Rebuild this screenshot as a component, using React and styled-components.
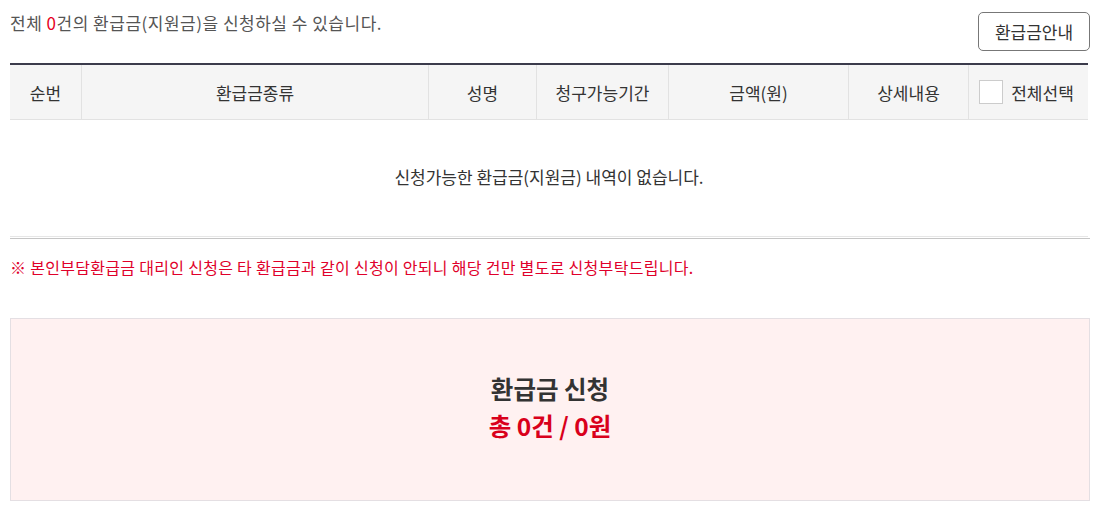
import styled, { createGlobalStyle } from 'styled-components';

const GlobalStyle = createGlobalStyle`
  body {
    margin: 0;
    background: #ffffff;
    font-family: "Noto Sans CJK KR", "Noto Sans", sans-serif;
  }
`;

const Page = styled.div`
  width: 1080px;
  padding: 11px 0 0 10px;
`;

const TopBar = styled.div`
  display: flex;
  justify-content: space-between;
  align-items: flex-start;
  margin-bottom: 12px;
`;

const Summary = styled.p`
  margin: 0;
  font-size: 17px;
  line-height: 24px;
  color: #555555;
  letter-spacing: 0.5px;

  > em {
    font-style: normal;
    color: #e60023;
  }
`;

const GuideBtn = styled.button`
  width: 112px;
  height: 39px;
  margin-top: 1px;
  border: 1px solid #777777;
  border-radius: 5px;
  background: #ffffff;
  font-family: inherit;
  font-size: 17px;
  color: #333333;
  cursor: pointer;
`;

const Table = styled.table`
  width: 1078px;
  border-collapse: collapse;
  table-layout: fixed;
  border-top: 2px solid #3b3b4b;
`;

const Th = styled.th`
  width: ${p => (p.w ? `${p.w}px` : 'auto')};
  height: 54px;
  padding: 0;
  background: #f5f5f5;
  border-bottom: 1px solid #e2e2e2;
  border-left: ${p => (p.first ? 'none' : '1px solid #e2e2e2')};
  font-size: 17px;
  font-weight: 400;
  color: #333333;
`;

const CheckLabel = styled.label`
  display: flex;
  align-items: center;
  justify-content: center;
  gap: 8px;
  margin-left: -4px;
`;

const CheckBox = styled.span`
  width: 22px;
  height: 22px;
  border: 1px solid #cccccc;
  background: #ffffff;
`;

const EmptyCell = styled.td`
  height: 112px;
  padding: 0 0 4px;
  text-align: center;
  font-size: 17px;
  color: #333333;
  border-bottom: 1px solid #e6e6e6;
`;

const Divider = styled.div`
  height: 1px;
  margin-top: 1px;
  background: #c6c6c6;
`;

const Notice = styled.p`
  margin: 16px 0 39px;
  font-size: 16px;
  line-height: 24px;
  color: #e0002a;
  letter-spacing: 0.3px;
`;

const ApplyBox = styled.div`
  border: 1px solid #e4dfe3;
  background: #fff1f1;
  padding: 51px 0 56px;
  text-align: center;
`;

const ApplyLine = styled.div`
  font-size: 24.5px;
  line-height: 37px;
  font-weight: 700;
  color: ${p => (p.red ? '#d9001b' : '#333333')};
`;

const columns = [
  { title: '순번', w: 71 },
  { title: '환급금종류', w: 346 },
  { title: '성명', w: 107 },
  { title: '청구가능기간', w: 131 },
  { title: '금액(원)', w: 179 },
  { title: '상세내용', w: 119 },
];

function App() {
  return (
    <>
      <GlobalStyle />
      <Page>
        <TopBar>
          <Summary>
            전체 <em>0</em>건의 환급금(지원금)을 신청하실 수 있습니다.
          </Summary>
          <GuideBtn>환급금안내</GuideBtn>
        </TopBar>
        <Table>
          <thead>
            <tr>
              {columns.map((c, i) => (
                <Th key={c.title} w={c.w} first={i === 0}>
                  {c.title}
                </Th>
              ))}
              <Th>
                <CheckLabel>
                  <CheckBox />
                  전체선택
                </CheckLabel>
              </Th>
            </tr>
          </thead>
          <tbody>
            <tr>
              <EmptyCell colSpan={7}>신청가능한 환급금(지원금) 내역이 없습니다.</EmptyCell>
            </tr>
          </tbody>
        </Table>
        <Divider />
        <Notice>※ 본인부담환급금 대리인 신청은 타 환급금과 같이 신청이 안되니 해당 건만 별도로 신청부탁드립니다.</Notice>
        <ApplyBox>
          <ApplyLine>환급금 신청</ApplyLine>
          <ApplyLine red>총 0건 / 0원</ApplyLine>
        </ApplyBox>
      </Page>
    </>
  );
}

export default App;
